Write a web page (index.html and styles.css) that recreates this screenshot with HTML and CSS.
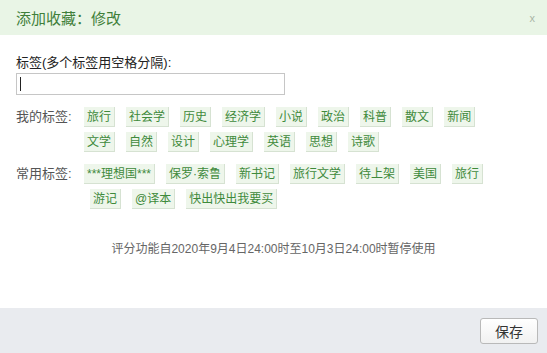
FILE: index.html
```html
<!DOCTYPE html>
<html lang="zh-CN">
<head>
    <meta charset="UTF-8">
    <meta name="viewport" content="width=device-width, initial-scale=1.0">
    <title>添加收藏</title>
    <link rel="stylesheet" href="styles.css">
</head>
<body>

    <div class="dialog">
        <div class="dialog-hd">
            <h2 class="dialog-title">添加收藏：修改</h2>
            <a class="dialog-close" href="#">x</a>
        </div>

        <div class="dialog-bd">
            <label class="field-label" for="tags-input">标签(多个标签用空格分隔):</label>
            <div class="input-wrap">
                <input id="tags-input" class="tags-input" type="text">
                <span class="caret"></span>
            </div>

            <div class="tag-group">
                <span class="tag-label">我的标签:</span>
                <div class="tag-list">
                    <a class="tag" href="#">旅行</a>
                    <a class="tag" href="#">社会学</a>
                    <a class="tag" href="#">历史</a>
                    <a class="tag" href="#">经济学</a>
                    <a class="tag" href="#">小说</a>
                    <a class="tag" href="#">政治</a>
                    <a class="tag" href="#">科普</a>
                    <a class="tag" href="#">散文</a>
                    <a class="tag" href="#">新闻</a>
                    <a class="tag" href="#">文学</a>
                    <a class="tag" href="#">自然</a>
                    <a class="tag" href="#">设计</a>
                    <a class="tag" href="#">心理学</a>
                    <a class="tag" href="#">英语</a>
                    <a class="tag" href="#">思想</a>
                    <a class="tag" href="#">诗歌</a>
                </div>
            </div>

            <div class="tag-group">
                <span class="tag-label">常用标签:</span>
                <div class="tag-list">
                    <a class="tag" href="#">***理想国***</a>
                    <a class="tag" href="#">保罗·索鲁</a>
                    <a class="tag" href="#">新书记</a>
                    <a class="tag" href="#">旅行文学</a>
                    <a class="tag" href="#">待上架</a>
                    <a class="tag" href="#">美国</a>
                    <a class="tag" href="#">旅行</a>
                    <a class="tag first-wrap" href="#">游记</a>
                    <a class="tag" href="#">@译本</a>
                    <a class="tag" href="#">快出快出我要买</a>
                </div>
            </div>

            <p class="notice">评分功能自2020年9月4日24:00时至10月3日24:00时暂停使用</p>
        </div>

        <div class="dialog-ft">
            <button class="save-btn">保存</button>
        </div>
    </div>

</body>
</html>
```

FILE: styles.css
```css
  body {
      margin: 0;
      padding: 0;
      background-color: #fff;
      color: #333;
      font-family: 'Liberation Sans', 'Noto Sans CJK SC', sans-serif;
  }

  .dialog {
      width: 547px;
      height: 353px;
      display: flex;
      flex-direction: column;
      background-color: #fff;
  }

  /* 标题栏 */
  .dialog-hd {
      height: 35px;
      padding: 0 16px;
      display: flex;
      justify-content: space-between;
      align-items: center;
      background-color: #e9f5e6;
  }
  .dialog-title {
      margin: 0;
      font-size: 15px;
      font-weight: normal;
      color: #3f7f3a;
  }
  .dialog-close {
      font-size: 11px;
      color: #a9b6a6;
      text-decoration: none;
      margin-right: -4px;
  }

  .dialog-bd {
      flex: 1;
      padding: 19px 16px 0;
  }

  .field-label {
      display: block;
      font-size: 13px;
      line-height: 18px;
      color: #222;
  }

  .input-wrap {
      position: relative;
      width: 269px;
      margin-top: 1px;
  }
  .tags-input {
      display: block;
      box-sizing: border-box;
      width: 269px;
      height: 22px;
      margin: 0;
      border: 1px solid #c6c6c6;
      border-radius: 0;
      padding: 0 4px;
      font-size: 13px;
  }
  .caret {
      position: absolute;
      left: 4px;
      top: 4px;
      width: 1px;
      height: 14px;
      background-color: #222;
  }

  /* 标签 */
  .tag-group {
      display: flex;
      margin-top: 12px;
  }
  .tag-label {
      flex: none;
      width: 68px;
      font-size: 13px;
      line-height: 20px;
      color: #555;
  }
  .tag-list {
      display: flex;
      flex-wrap: wrap;
      gap: 5px 11px;
      width: 420px;
  }
  .tag {
      display: inline-block;
      height: 20px;
      line-height: 20px;
      padding: 0 3px;
      font-size: 12px;
      color: #3e8a3b;
      text-decoration: none;
      background-color: #eef6eb;
      border-right: 1px solid #d6e2d2;
      border-bottom: 1px solid #d6e2d2;
      box-sizing: border-box;
  }
  .first-wrap {
      margin-left: 6px;
  }

  .notice {
      margin: 31px 0 0;
      text-align: center;
      font-size: 12px;
      line-height: 18px;
      color: #666;
  }

  /* 底栏 */
  .dialog-ft {
      height: 45px;
      padding: 0 9px;
      display: flex;
      justify-content: flex-end;
      align-items: center;
      background-color: #e9ebef;
  }
  .save-btn {
      width: 58px;
      height: 26px;
      padding: 0;
      font-size: 14px;
      font-family: 'Liberation Sans', 'Noto Sans CJK SC', sans-serif;
      color: #333;
      background: linear-gradient(#ffffff, #f1f1f1);
      border: 1px solid #b9b9b9;
      border-radius: 3px;
      cursor: pointer;
  }
```
